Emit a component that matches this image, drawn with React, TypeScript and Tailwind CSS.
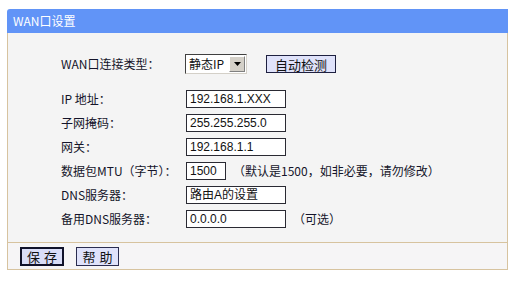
import React from "react";

const cjk = { fontFamily: '"Noto Sans CJK SC", "Noto Sans", sans-serif' };
const val = { fontFamily: '"Liberation Sans", "Noto Sans CJK SC", sans-serif' };

function Row({ label, children }: { label: string; children: React.ReactNode }) {
  return (
    <div className="flex h-[24px] items-center">
      <div className="w-[125px] shrink-0 text-[12px] leading-none text-[#14142a]">{label}</div>
      <div className="flex items-center">{children}</div>
    </div>
  );
}

function Input({ value, w = 100 }: { value: string; w?: number }) {
  return (
    <div
      className="flex h-[18px] items-center border border-[#2a2a33] bg-white pl-[3px] text-[12px] leading-none text-[#111]"
      style={{ ...val, width: w }}
    >
      {value}
    </div>
  );
}

export default function App() {
  return (
    <div className="h-[300px] w-[510px] bg-white" style={cjk}>
      <div className="ml-[7px] pt-[9px] w-[501px]">
        <div className="flex h-[24px] items-center rounded-tl-[3px] bg-[#6194f7] pl-[6px] text-[12px] leading-none text-white">
          WAN口设置
        </div>
        <div className="border-x border-b border-[#d7c39f] bg-[#f4f4f4] pt-[19px] pb-[11px] pl-[53px]">
          <div className="flex h-[24px] items-center">
            <div className="w-[124px] shrink-0 text-[12px] leading-none text-[#14142a]">WAN口连接类型：</div>
            <div className="flex h-[20px] w-[62px] items-center border border-[#404040] border-b-[#d4d0c8] border-r-[#d4d0c8] bg-white">
              <span className="flex-1 pl-[3px] text-[12px] leading-none text-[#111]">静态IP</span>
              <span className="mr-[1px] flex h-[16px] w-[16px] items-center justify-center border border-[#fff] border-b-[#808080] border-r-[#808080] bg-[#d4d0c8]">
                <svg width="7" height="4" viewBox="0 0 7 4"><path d="M0 0H7L3.5 4Z" fill="#000" /></svg>
              </span>
            </div>
            <div className="ml-[19px] flex h-[18px] w-[70px] items-center justify-center border border-[#1e2040] bg-[#dfe2fa] text-[13px] leading-none text-[#111]">
              自动检测
            </div>
          </div>
          <div className="h-[11px]" />
          <Row label="IP 地址："><Input value="192.168.1.XXX" /></Row>
          <Row label="子网掩码："><Input value="255.255.255.0" /></Row>
          <Row label="网关："><Input value="192.168.1.1" /></Row>
          <Row label="数据包MTU（字节）：">
            <Input value="1500" w={40} />
            <span className="ml-[7px] text-[12px] leading-none text-[#14142a]">（默认是1500，如非必要，请勿修改）</span>
          </Row>
          <Row label="DNS服务器："><Input value="路由A的设置" /></Row>
          <Row label="备用DNS服务器：">
            <Input value="0.0.0.0" />
            <span className="ml-[7px] text-[12px] leading-none text-[#14142a]">（可选）</span>
          </Row>
        </div>
        <div className="flex h-[27px] items-center gap-[12px] border-x border-b border-[#d7c39f] bg-[#f6f5f6] pl-[12px]">
          <div className="flex h-[19px] w-[44px] items-center justify-center border-2 border-[#10122a] bg-[#d9ddf7] text-[13px] leading-none tracking-[4px] text-[#111]">
            <span className="pl-[4px]">保存</span>
          </div>
          <div className="flex h-[19px] w-[43px] items-center justify-center border border-[#2a2c50] bg-[#dfe2fa] text-[13px] leading-none tracking-[4px] text-[#111]">
            <span className="pl-[4px]">帮助</span>
          </div>
        </div>
      </div>
    </div>
  );
}
